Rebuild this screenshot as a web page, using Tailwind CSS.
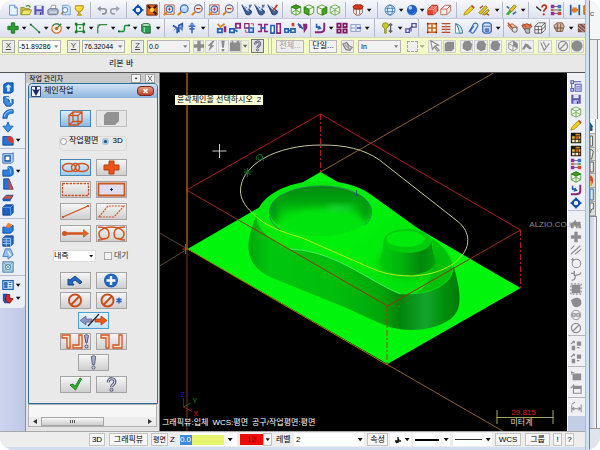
<!DOCTYPE html>
<html lang="ko">

<head>
  <meta charset="UTF-8" />
  <meta name="viewport" content="width=device-width, initial-scale=1.0" />
  <title>체인작업</title>
  <script src="https://cdn.jsdelivr.net/npm/@tailwindcss/browser@4"></script>
</head>

<body class="bg-white font-['Liberation_Sans','Noto_Sans_CJK_KR',sans-serif] text-[8px] leading-none text-black">

  <!-- Icon sprite -->
  <svg class="hidden" aria-hidden="true">
    <symbol id="v" viewBox="0 0 8 14"><path d="M1.500 5.500h5.400L4.200 9z" fill="#111" /></symbol>
    <symbol id="new" viewBox="0 0 14 14"><path d="M3 1.500h6l3 3v8.500H3z" fill="#e8f2ff" stroke="#5a86c8" /><path d="M9 1.500v3h3" fill="#a9c8f0" stroke="#5a86c8" /></symbol>
    <symbol id="open" viewBox="0 0 14 14"><path d="M1 12V4h4l1 1.500h5V12z" fill="#d8b83c" stroke="#8d8a2a" /><path d="M1 12.500 4 7h9.500L11 12.500z" fill="#f6e36a" stroke="#8d8a2a" /><path d="M7 3c2-2 4-1 5 1" fill="none" stroke="#3a9a2d" stroke-width="1.500" /></symbol>
    <symbol id="save" viewBox="0 0 14 14"><path d="M1.500 2h11v10.500h-11z" fill="#5b57b8" /><path d="M4 2h6v4H4z" fill="#e6e8fa" /><path d="M4 8.500h6v4H4z" fill="#c2c7ee" /><path d="M8 9.500h1.500v3H8z" fill="#34307c" /></symbol>
    <symbol id="print" viewBox="0 0 14 14"><path d="M4 6 5.500 1.500h5L9.500 6z" fill="#fff" stroke="#8995ad" /><path d="M1 7l2-1.500h9L13 7v4l-2 1.500H2L1 11z" fill="#a9b4c8" stroke="#636f88" /><path d="M3 9.500h8" stroke="#eff" /></symbol>
    <symbol id="preview" viewBox="0 0 14 14"><path d="M3 1.500h7l2 2v9H3z" fill="#cfe4fa" stroke="#6a9bd4" /><circle cx="6" cy="7" r="3" fill="#eef7ff" stroke="#4a78b8" /><path d="m4 9-2.500 3" stroke="#b67b40" stroke-width="1.800" /></symbol>
    <symbol id="cup" viewBox="0 0 14 14"><path d="M3 2h9c0 4-1 6-4 7v2l2 2H5l1.500-2V9C3 8 2 6 3 2z" fill="#f4cb18" stroke="#a98500" /><path d="M3 4h8M4 6h6" stroke="#fff08a" /></symbol>
    <symbol id="undo" viewBox="0 0 14 14"><path d="M3 5.500h6a3 3 0 0 1 0 6H7" fill="none" stroke="#8b8fa0" stroke-width="1.800" /><path d="M5.500 2 1.500 5.500l4 3.500z" fill="#8b8fa0" /></symbol>
    <symbol id="redo" viewBox="0 0 14 14"><path d="M11 5.500H5a3 3 0 0 0 0 6h2" fill="none" stroke="#9b9fae" stroke-width="1.800" /><path d="M8.500 2l4 3.500-4 3.500z" fill="#9b9fae" /></symbol>
    <symbol id="target" viewBox="0 0 14 14"><path d="M7 0l3 4H4zM7 14l3-4H4zM0 7l4-3v6zM14 7l-4-3v6z" fill="#0b4fae" /><circle cx="7" cy="7" r="3.600" fill="#eaf4ff" stroke="#0b4fae" stroke-width="2" /></symbol>
    <symbol id="fit" viewBox="0 0 14 14"><path d="M1 1h12v12H1z" fill="#e86a10" stroke="#5d2208" /><path d="m2 2 10 10M12 2 9 5" stroke="#3d1607" stroke-width="2.500" /><circle cx="7" cy="7" r="2.500" fill="#ffcf4b" /></symbol>
    <symbol id="zoomwin" viewBox="0 0 14 14"><path d="M2 1h11v11H2z" fill="none" stroke="#c0532e" /><circle cx="7.500" cy="6" r="3.800" fill="#d7e8fb" stroke="#3c6eb5" stroke-width="1.300" /><path d="m5 9-4 4" stroke="#e0821c" stroke-width="2.200" /><path d="M5.500 6h4m-2-2v4" stroke="#c22" /></symbol>
    <symbol id="zoom" viewBox="0 0 14 14"><circle cx="8.500" cy="5.500" r="4.500" fill="#b9d8fa" stroke="#3c6eb5" stroke-width="1.400" /><path d="m5 9-4 4" stroke="#e0821c" stroke-width="2.400" /><path d="M6 5c1-2 3-2 4-1" stroke="#fff" fill="none" /></symbol>
    <symbol id="zoomout" viewBox="0 0 14 14"><circle cx="8.500" cy="5.500" r="4.500" fill="#fbe8d2" stroke="#5d6fa8" stroke-width="1.400" /><path d="m5 9-4 4" stroke="#e0821c" stroke-width="2.400" /><path d="M6 5.500h5" stroke="#c03a1e" stroke-width="1.500" /></symbol>
    <symbol id="orbit" viewBox="0 0 14 14"><path d="M1 1 6 12c4 2 7-1 6-4z" fill="#3c5f9c" stroke="#182c58" /><path d="M2 1l7 7M11 1 6 7" stroke="#cfe0ff" stroke-width="1.500" /><path d="M9 1h4L10 6" fill="#5675aa" /></symbol>
    <symbol id="orbitred" viewBox="0 0 14 14"><path d="M1 1 6 12c4 2 7-1 6-4z" fill="#3c5f9c" stroke="#182c58" /><path d="M2 1l7 7" stroke="#cfe0ff" stroke-width="1.500" /><path d="m12 1-5 7" stroke="#d0391b" stroke-width="2" /></symbol>
    <symbol id="cubetop" viewBox="0 0 14 14"><path d="M7 1l5.500 2.500v7L7 13l-5.500-2.500v-7z" fill="#eef7e8" stroke="#4c9a2b" /><path d="M7 1l5.500 2.500L7 6 1.500 3.500z" fill="#3f9a1e" stroke="#2c7a13" /><path d="M7 6v7M2 10l5-3 5 3" fill="none" stroke="#4c9a2b" /></symbol>
    <symbol id="cubefront" viewBox="0 0 14 14"><path d="M7 1l5.500 2.500v7L7 13l-5.500-2.500v-7z" fill="#eef7e8" stroke="#4c9a2b" /><path d="M1.500 3.500 7 6v7l-5.500-2.500z" fill="#44a51e" stroke="#2c7a13" /><path d="m7 6 5.500-2.500" stroke="#4c9a2b" /></symbol>
    <symbol id="cuberight" viewBox="0 0 14 14"><path d="M7 1l5.500 2.500v7L7 13l-5.500-2.500v-7z" fill="#eef7e8" stroke="#4c9a2b" /><path d="M12.500 3.500 7 6v7l5.500-2.500z" fill="#44a51e" stroke="#2c7a13" /><path d="M7 6 1.500 3.500" stroke="#4c9a2b" /></symbol>
    <symbol id="cubewire" viewBox="0 0 14 14"><path d="M7 1l5.500 2.500v7L7 13l-5.500-2.500v-7zM7 6v7M1.500 3.500 7 6l5.500-2.500M2 10l5-3 5 3" fill="#f2faee" stroke="#6aa84b" /></symbol>
    <symbol id="cubered" viewBox="0 0 14 14"><path d="M2 5h10v5l-3 3H5l-3-3z" fill="#fff" stroke="#8c3a2a" /><path d="M1 3l3-2h7l2 2-2 3H3z" fill="#d8371c" stroke="#8f1a0b" /><path d="M5 6v6M9 6v6" stroke="#8c3a2a" /></symbol>
    <symbol id="globe" viewBox="0 0 14 14"><circle cx="7" cy="7" r="5.800" fill="#e2f1ff" stroke="#3977b8" /><ellipse cx="7" cy="7" rx="2.800" ry="5.800" fill="none" stroke="#3977b8" /><path d="M1.500 5h11M1.500 9h11" stroke="#3977b8" /></symbol>
    <symbol id="ball" viewBox="0 0 14 14"><circle cx="7" cy="7" r="6" fill="#1f5fc0" /><circle cx="5" cy="4.500" r="2.200" fill="#a9d0ff" /><path d="M3 11c3 2 6 1 8-2" stroke="#5ca0ef" fill="none" /></symbol>
    <symbol id="solidred" viewBox="0 0 14 14"><path d="M1 6 6 1.500h6.500V8L8 12.500H1z" fill="#e5452f" stroke="#a5170c" /><path d="M1 6h7v6.500M8 6l4.500-4.500M4 3.500h6.500V10" fill="none" stroke="#ffc2b3" /></symbol>
    <symbol id="wirered" viewBox="0 0 14 14"><path d="M1 6 6 1.500h6.500V8L8 12.500H1zM1 6h7v6.500M8 6l4.500-4.500" fill="#fff1ec" stroke="#c2554a" /></symbol>
    <symbol id="pencil" viewBox="0 0 14 14"><path d="m1 13 1.500-4L10 2l3 2.500-7.500 7z" fill="#f0d21c" stroke="#a88b10" /><path d="m10 2 3 2.500" stroke="#b5443b" stroke-width="2" /></symbol>
    <symbol id="pencils" viewBox="0 0 14 14"><path d="M1 10 9 2l2 2-8 8zM5 12l7-6 1 2-5 5z" fill="#e6c91d" stroke="#8d7a15" /><path d="m2 5 4-3M9 11l4 2" stroke="#a04a20" stroke-width="1.500" /></symbol>
    <symbol id="paint" viewBox="0 0 14 14"><path d="m1 12 4-5 3 2-4 4z" fill="#4aa53b" /><path d="m5 7 6-6 2 2-5 6z" fill="#e8c61f" stroke="#91770d" /><path d="M2 3l3 2M9 12l4-3" stroke="#4174be" stroke-width="2" /></symbol>
    <symbol id="query" viewBox="0 0 14 14"><path d="m0 3 6 5" stroke="#333" stroke-width="1.500" /><path d="M7 4c0-4 6-3 5 0 0 2-3 2-3 5" fill="none" stroke="#b73412" stroke-width="2" /><circle cx="9" cy="12" r="1.300" fill="#b73412" /></symbol>
    <symbol id="nodes" viewBox="0 0 14 14"><path d="M3 3h8M3 7h8M3 11h8" stroke="#555" /><path d="M1 1h4v4H1zM1 9h4v4H1z" fill="#9b2b98" /><path d="M9 1h4v4H9z" fill="#3b70cf" /><path d="M9 9h4v4H9z" fill="#d34632" /><path d="M1 6h3v2H1z" fill="#d34632" /><path d="M10 6h3v2h-3z" fill="#3a9a3f" /></symbol>
    <symbol id="dim" viewBox="0 0 14 14"><path d="M2 1v12M12 1v12" stroke="#1c5cb1" stroke-width="2" /><path d="M3 7h8" stroke="#e57b1f" stroke-width="2.500" /><path d="M4 4h5v6H4z" fill="#e57b1f" /></symbol>
    <symbol id="orange" viewBox="0 0 14 14"><path d="M1 2h11v10H1z" fill="#ec8c18" stroke="#a34e0a" /><path d="M3 4h4v6H3z" fill="#ffd66d" /></symbol>
    <symbol id="plus" viewBox="0 0 14 14"><path d="M5 1h4v4h4v4H9v4H5V9H1V5h4z" fill="#2d9a35" stroke="#15701c" /></symbol>
    <symbol id="line" viewBox="0 0 14 14"><path d="m2 3 10 9" stroke="#2f9a45" stroke-width="1.500" /><path d="M1 2h2v2H1zM11 11h2v2h-2z" fill="#135c25" /></symbol>
    <symbol id="circle" viewBox="0 0 14 14"><circle cx="6.500" cy="7.500" r="5.500" fill="#fff4e6" stroke="#c8702c" stroke-width="1.300" /><path d="M2 4.500a5.500 5.500 0 0 1 8-1" fill="none" stroke="#2f8f43" stroke-width="1.600" /><circle cx="6.500" cy="7.500" r="2" fill="#e0631c" /><path d="m7 7 5-5" stroke="#2f8f43" stroke-width="1.500" /></symbol>
    <symbol id="rect" viewBox="0 0 14 14"><path d="M3 3h8v8H3z" fill="#effbef" stroke="#2f8f43" stroke-width="1.500" /><path d="M1 1h3v3H1zM10 1h3v3h-3zM1 10h3v3H1zM10 10h3v3h-3z" fill="#1b7a2e" /><path d="M6 6h2v2H6z" fill="#1b7a2e" /></symbol>
    <symbol id="arc" viewBox="0 0 14 14"><path d="M2 13V8c0-4 2-5 5-5h6" fill="none" stroke="#2f8f43" stroke-width="1.500" /><path d="M2 7V3h4" fill="none" stroke="#555" stroke-dasharray="1 1" /></symbol>
    <symbol id="spline" viewBox="0 0 14 14"><path d="M1 11h5c3 0 0-7 3-7h4" fill="none" stroke="#228a38" stroke-width="1.800" /><path d="M0 10h2v2H0zM12 3h2v2h-2z" fill="#135c25" /></symbol>
    <symbol id="cyl" viewBox="0 0 14 14"><path d="M2 3h8l2 2v8H5l-3-2z" fill="#2f9a54" stroke="#1b6434" /><ellipse cx="7" cy="3.500" rx="5" ry="1.800" fill="#b6e6c0" stroke="#1b6434" /><path d="M5 6v6" stroke="#a7ddb5" stroke-width="1.500" /></symbol>
    <symbol id="split" viewBox="0 0 14 14"><path d="M1 4l5 3v6M8 12V4l4-2v4" fill="none" stroke="#2a57b5" stroke-width="2" /><path d="m2 10 4-4M8 6h4v4z" stroke="#5576b8" fill="#5576b8" /></symbol>
    <symbol id="pin" viewBox="0 0 14 14"><path d="M7 1v12M3 5h8M4 8h6" stroke="#3a64bd" stroke-width="1.800" /><circle cx="7" cy="3" r="2" fill="#5c83d0" /></symbol>
    <symbol id="xf1" viewBox="0 0 14 14"><path d="M2 8h5v4H2z" fill="#fff" stroke="#1f60b8" stroke-width="2" /><path d="M9 5h3v7H9z" fill="#a71e73" /><path d="m2 2 3 4 5-4" fill="none" stroke="#e0821c" stroke-width="2" /></symbol>
    <symbol id="xf2" viewBox="0 0 14 14"><path d="M1 8h5v4H1z" fill="#fff" stroke="#1f60b8" stroke-width="2" /><path d="M8 2h5v5H8z" fill="#fff" stroke="#8e2178" stroke-width="2" /><path d="m6 9 4 2" stroke="#1f60b8" stroke-width="2" /></symbol>
    <symbol id="xf3" viewBox="0 0 14 14"><path d="M2 2h5v5H2z" fill="#fff" stroke="#8e2178" stroke-width="1.500" /><path d="M7 7h5v5H7z" fill="#cfe0fa" stroke="#1f60b8" stroke-width="1.800" /><path d="M3 9v3h3M9 2h3v3" stroke="#c22f57" fill="none" /></symbol>
    <symbol id="xf4" viewBox="0 0 14 14"><path d="M1 3h4v8H1M13 3H9v8h4" fill="none" stroke="#8e2178" stroke-width="1.800" /><path d="M4 7h6" stroke="#1f60b8" stroke-width="2" /></symbol>
    <symbol id="xf5" viewBox="0 0 14 14"><path d="M1 4h4v9H1z" fill="#fff" stroke="#1f60b8" stroke-width="1.800" /><path d="M8 2h4v11H8z" fill="#fff" stroke="#8e2178" stroke-width="1.800" /></symbol>
    <symbol id="xf6" viewBox="0 0 14 14"><path d="M1 8h4v4H1zM8 8h5v4H8z" fill="#fff" stroke="#1f60b8" stroke-width="1.800" /><path d="M5 10h3" stroke="#1f60b8" stroke-width="2" /><path d="M9 1h3v4H9z" fill="#d2371f" /></symbol>
    <symbol id="xf7" viewBox="0 0 14 14"><path d="M1 3h4v4H3zM7 2h5v5L8 13z" fill="#8e2178" /><path d="m1 2 6 6" stroke="#1f60b8" stroke-width="2" /></symbol>
    <symbol id="elbow" viewBox="0 0 14 14"><path d="M3 2v4h4" fill="none" stroke="#1f60b8" stroke-width="1.800" /><path d="M12 1v7c0 3-2 4-4 4H1" fill="none" stroke="#8e2178" stroke-width="2.200" /><path d="M6 4l3 4-5 1z" fill="#1f60b8" /></symbol>
    <symbol id="grid4" viewBox="0 0 14 14"><path d="M1.500 2h4v4h-4zM8.500 2h4v4h-4zM1.500 8.500h4v4h-4zM8.500 8.500h4v4h-4z" fill="#f4dff0" stroke="#7f1763" stroke-width="2" /></symbol>
    <symbol id="stretch" viewBox="0 0 14 14"><path d="M1 3h11v8H1zM1 7h5M7 3v8" fill="#e5edf9" stroke="#8593bd" /><path d="M8 7h5" stroke="#4764b0" stroke-width="2" /></symbol>
    <symbol id="lamp" viewBox="0 0 14 14"><path d="M4 1a3 3 0 0 1 1 6v6H3V7a3 3 0 0 1 1-6z" fill="#c5ca28" stroke="#8b901a" /><path d="M10 2v10M8 4l2-2 2 2M8 10l2 2 2-2" fill="none" stroke="#5c6270" stroke-width="1.500" /></symbol>
    <symbol id="link" viewBox="0 0 14 14"><path d="M1 8h4v4H1zM8 2h5v4H8z" fill="#fff" stroke="#4a4f9c" stroke-width="1.500" /><path d="M5 8l4-3M7 11V7" stroke="#4a4f9c" stroke-width="1.500" /></symbol>
    <symbol id="mesh" viewBox="0 0 14 14"><path d="M2 2h10v10H2zM7 2v10M2 7h10" fill="#fff3e4" stroke="#c8641e" stroke-width="1.600" /><path d="M1 1h2v2H1zM11 1h2v2h-2zM1 11h2v2H1zM11 11h2v2h-2z" fill="#8e2c15" /></symbol>
    <symbol id="rows" viewBox="0 0 14 14"><path d="M2 2h10M2 5.300h10M2 8.700h10M2 12h10" stroke="#b8472a" stroke-width="1.500" /><path d="M7 2v10" stroke="#d29a6b" /></symbol>
    <symbol id="fin" viewBox="0 0 14 14"><path d="M3 2c5 1 8 5 8 11H7C7 8 6 5 3 2z" fill="#cfeaf7" stroke="#25627e" /><path d="M3 2v11h4" fill="#fff" stroke="#3d87a5" /></symbol>
    <symbol id="clip" viewBox="0 0 14 14"><path d="m2 12 6-10c3-2 6 1 4 4l-4 6c-2 2-5 0-3-3l3-4" fill="#dceafc" stroke="#3c66b0" stroke-width="1.300" /></symbol>
    <symbol id="bluebox" viewBox="0 0 14 14"><path d="M2 3l2-2h6l2 2v8l-2 2H4l-2-2z" fill="#cfe1fb" stroke="#3c66b0" stroke-width="1.500" /><path d="M3 5h8M5 8h4v3H5z" fill="#5b8bd8" stroke="#3c66b0" /></symbol>
    <symbol id="cam1" viewBox="0 0 14 14"><path d="m1 4 5-2 6 4-2 5-5-2z" fill="#e9bfa5" stroke="#a8593a" /><circle cx="9" cy="9" r="3" fill="#e2e2e2" stroke="#555" /><path d="m1 1 5 6" stroke="#d0531c" stroke-width="1.800" /></symbol>
    <symbol id="cam2" viewBox="0 0 14 14"><path d="m1 4 6-2 6 3-3 3-6 1z" fill="#d28158" stroke="#7e3d22" /><path d="M4 8h6v5H6z" fill="#bdbdbd" stroke="#5a5a5a" /><path d="m2 2 4 4M12 2 9 5" stroke="#d0531c" stroke-width="1.500" /></symbol>
    <symbol id="wirebox" viewBox="0 0 14 14"><path d="M1 5l4-4h8v8l-4 4H1zM1 5h8v8M9 5l4-4M5 5v8M1 9h8M9 9l4-4" fill="#fafafa" stroke="#4b4b4b" /></symbol>
    <symbol id="tile" viewBox="0 0 14 14"><path d="M1 4l4-3h6l2 4-2 6H4z" fill="#d8b59e" stroke="#74503c" /><path d="M1 7h11M5 2v9M9 2v9" stroke="#74503c" /></symbol>
    <symbol id="film" viewBox="0 0 14 14"><path d="M1 2h12v10H1z" fill="#84504a" /><path d="m2 3 10 9M6 2l7 6M1 6l7 6" stroke="#d8c2bb" /></symbol>
    <symbol id="palette" viewBox="0 0 14 14"><path d="M1 1h12v12H1z" fill="#181818" /><path d="M2.500 5h3v3h-3zM10 5h2v3h-2z" fill="#f3c21d" /><path d="M6.500 5h3v3h-3z" fill="#e55d1f" /><path d="M2.500 9h3v3h-3zM6.500 9h3v3h-3z" fill="#f7eeb8" /><path d="M10 9h2v3h-2zM6.500 2h5v2h-5z" fill="#c98422" /></symbol>
    <symbol id="layers" viewBox="0 0 14 14"><path d="M1 1h3v3H1zM1 10h3v3H1zM2 4v6M4 2h9M6 5h7v8H6z" fill="#d5d9f3" stroke="#5a5eae" stroke-width="1.200" /><path d="M7 8h5M7 10.500h5" stroke="#5a5eae" /></symbol>

    <symbol id="s-up" viewBox="0 0 14 14"><path d="M2 3l3-2h8v10l-3 2H2z" fill="#1c6fd0" stroke="#0a4796" /><path d="M6 11V6H4l3.500-3.500L11 6H9v5z" fill="#d5ecff" /></symbol>
    <symbol id="s-rev" viewBox="0 0 14 14"><path d="M2 2h6v5l5-2v5l-3 3H5L2 9z" fill="#3a8be0" stroke="#0a4796" /><path d="M5 3c4 0 6 3 5 6" fill="none" stroke="#e2f1ff" stroke-width="1.800" /></symbol>
    <symbol id="s-sweep" viewBox="0 0 14 14"><path d="M1 12C1 5 6 1 13 2v4C8 6 6 8 6 12z" fill="#2f86e5" stroke="#0e4fa4" /><path d="M3 10c0-4 4-7 9-7" fill="none" stroke="#a6d3ff" /></symbol>
    <symbol id="s-loft" viewBox="0 0 14 14"><path d="M7 1l2 5h4l-6 7-6-7h4z" fill="#3d93ea" stroke="#1459b5" /></symbol>
    <symbol id="s-fillet" viewBox="0 0 14 14"><path d="M1 3h7c4 0 5 2 5 5v5H1z" fill="#2176d8" stroke="#0b479a" /><path d="M6 3h3c3 0 4 2 4 5v3c-4 0-7-3-7-8z" fill="#e8362a" /></symbol>
    <symbol id="s-shell" viewBox="0 0 14 14"><path d="M1 2h10l2-1v10l-2 2H1z" fill="#bcdcfb" stroke="#2460a8" /><path d="M3.500 4.500h6v6h-6z" fill="#f2faff" stroke="#12509c" stroke-width="1.500" /></symbol>
    <symbol id="s-bool" viewBox="0 0 14 14"><path d="M1 6h6V2h4c2 2 2 3 2 5v4l-3 2H1z" fill="#2a7fe0" stroke="#0b479a" /><path d="M7 2l3 4v4" stroke="#9bccfb" fill="none" /></symbol>
    <symbol id="s-draft" viewBox="0 0 14 14"><path d="M2 1h6l5 12H2z" fill="#2176d8" stroke="#0b479a" /><path d="M7 1l6 12H8z" fill="#e0432c" /></symbol>
    <symbol id="s-plate" viewBox="0 0 14 14"><path d="m1 9 4-4h8l-3 5H1z" fill="#c8573f" stroke="#173f88" /><path d="M1 9h9v3H1z" fill="#1a5cb8" /></symbol>
    <symbol id="s-cube" viewBox="0 0 14 14"><path d="M1 4l3-3h9v9l-3 3H1z" fill="#1c60c4" stroke="#0a377c" /><path d="M1 4h9v9M10 4l3-3" fill="none" stroke="#6ba7ef" /></symbol>
    <symbol id="s-push" viewBox="0 0 14 14"><path d="M1 6h8l4-2v6l-3 3H1z" fill="#2a80e0" stroke="#0b479a" /><path d="m4 6 3-5 5 2-3 4z" fill="#ef8234" /></symbol>
    <symbol id="s-mesh" viewBox="0 0 14 14"><path d="M1 4l3-3h9v9l-3 3H1z" fill="#2c6dbf" stroke="#0a377c" /><path d="M1 7h9M5 4v9M1 10h9M1 4h9v9" fill="none" stroke="#a9cdf5" /></symbol>
    <symbol id="s-flip" viewBox="0 0 14 14"><path d="M4 1h6l3 7-6 5v-3H1z" fill="#91bff0" stroke="#3a78c2" /><path d="M7 4l3 5" stroke="#fff" stroke-width="1.500" /></symbol>
    <symbol id="s-net" viewBox="0 0 14 14"><path d="M1 1h12v12H1z" fill="#b6d5e8" stroke="#34709b" /><circle cx="7" cy="7" r="3" fill="#e5f5fd" stroke="#34709b" /><path d="m2 2 10 10M12 2 2 12" stroke="#6aa3c8" /></symbol>
    <symbol id="s-doc" viewBox="0 0 14 14"><path d="M1 2h12v10H1z" fill="#d5e8fb" stroke="#2460a8" stroke-width="1.500" /><path d="M3 4h3v3H3zM3 8h3v2H3zM8 4h3M8 6.500h3M8 9h3" stroke="#2460a8" fill="#2f7fdc" /></symbol>
    <symbol id="s-mix" viewBox="0 0 14 14"><path d="M1 2h5v4h3v7H3L1 10z" fill="#1c55b8" /><path d="M5 3h4v4l4 1-4 5-5-3z" fill="#d8292b" stroke="#7c1220" /></symbol>

    <!-- disabled glyphs take the current colour -->
    <symbol id="g-fig" viewBox="0 0 14 14"><path d="M1 12V6l3-1 2-3 2 3 4-1 1 8h-3V9H9v3H7V9H4v3z" fill="currentColor" /></symbol>
    <symbol id="g-plus" viewBox="0 0 14 14"><path d="M5 1h4v4h4v4H9v4H5V9H1V5h4z" fill="currentColor" /></symbol>
    <symbol id="g-lines" viewBox="0 0 14 14"><path d="m1 12 11-10M6 12l7-6M1 6l4-4" stroke="currentColor" stroke-width="1.300" /></symbol>
    <symbol id="g-circ" viewBox="0 0 14 14"><circle cx="7.500" cy="7.500" r="5" fill="none" stroke="currentColor" stroke-width="1.200" /><path d="M1 3h4M3 1v5" stroke="currentColor" /></symbol>
    <symbol id="g-spl" viewBox="0 0 14 14"><path d="M2 12c6 0 3-5 5-6s4 1 6-3M1 4h4M5 1v6" fill="none" stroke="currentColor" stroke-width="1.500" /></symbol>
    <symbol id="g-sq" viewBox="0 0 14 14"><path d="M2 2h10v10H2z" fill="currentColor" /><path d="M1 1h12v12H1z" fill="none" stroke="currentColor" stroke-width="1.500" stroke-dasharray="2 2" /></symbol>
    <symbol id="g-dot" viewBox="0 0 14 14"><path d="M7.500 2a5.500 5.500 0 1 1-5 7L1 5l3-2z" fill="currentColor" /></symbol>
    <symbol id="g-net" viewBox="0 0 14 14"><circle cx="7" cy="7" r="5.500" fill="none" stroke="currentColor" /><path d="M3 5h3v4H3zM8 5h3v4H8zM2 7h10" fill="none" stroke="currentColor" /></symbol>
    <symbol id="g-no" viewBox="0 0 14 14"><circle cx="7" cy="7" r="5.300" fill="none" stroke="currentColor" stroke-width="1.500" /><path d="m3.500 10.500 7-7" stroke="currentColor" stroke-width="1.500" /></symbol>
    <symbol id="g-copy" viewBox="0 0 14 14"><path d="M8 3h5v5H8zM2 8h4v5H2z" fill="currentColor" /><path d="M1 6l4-4M5 5V2M8 10h3" stroke="currentColor" stroke-width="1.500" /></symbol>
    <symbol id="g-fill" viewBox="0 0 14 14"><path d="M3 4h10v8H3z" fill="currentColor" /><path d="M1 3h4M2 1v5" stroke="currentColor" /></symbol>
    <symbol id="g-win" viewBox="0 0 14 14"><path d="M4 4h9v8H4z" fill="none" stroke="currentColor" stroke-width="1.300" /><path d="M4 4h9v3H4z" fill="currentColor" /><path d="m1 6 4-4" stroke="currentColor" stroke-width="1.500" /></symbol>
    <symbol id="g-dim" viewBox="0 0 14 14"><path d="M2 5v8M13 4v9M3 9h9M5 7 3 9l2 2M10 7l2 2-2 2M2 4l4-3" fill="none" stroke="currentColor" stroke-width="1.200" /></symbol>
    <symbol id="g-ball" viewBox="0 0 14 14"><circle cx="7" cy="7" r="6.500" fill="currentColor" /></symbol>
    <symbol id="g-hex" viewBox="0 0 14 14"><path d="m4 1.500 6-.5 3 4-1 6-5 2-5-3V5z" fill="currentColor" /></symbol>
    <symbol id="g-rbox" viewBox="0 0 14 14"><path d="m2 4 3-2h8v8l-3 3H2z" fill="currentColor" /></symbol>
    <symbol id="g-half" viewBox="0 0 14 14"><path d="m7 1 5 3v6l-5 3-5-3V4z" fill="none" stroke="currentColor" /><path d="m7 1 5 3v6l-5-3z" fill="currentColor" /><path d="M7 7v6M2 4l5 3" stroke="currentColor" /></symbol>
    <symbol id="g-bend" viewBox="0 0 14 14"><path d="M1 11l4-7 3 1 5 5-3 1-4-3-2 3z" fill="currentColor" /></symbol>
    <symbol id="g-check" viewBox="0 0 14 14"><path d="m2 3 4 9 6-8M5 2l3 6" fill="none" stroke="currentColor" stroke-width="1.300" /></symbol>
    <symbol id="g-arrow" viewBox="0 0 14 14"><path d="m2 1 9 5-4 1 5 5-2 1-4-5-2 3z" fill="#f6f6f6" stroke="currentColor" stroke-width="1.300" /></symbol>
    <symbol id="g-zap" viewBox="0 0 14 14"><path d="M9 1 3 7h3l-2 6 7-7H8l3-5z" fill="currentColor" /></symbol>
    <symbol id="g-bang" viewBox="0 0 14 14"><path d="M5 1h4L8 9H6zM5.500 10.500h3V13h-3z" fill="currentColor" /></symbol>
    <symbol id="g-cam" viewBox="0 0 14 14"><path d="M1 3h2V1h2v2h4V1h3v2h1v10H1z" fill="currentColor" /></symbol>
    <symbol id="g-chain" viewBox="0 0 14 14"><path d="m1 4 5-2 3 4 4 2-3 4-5-1z" fill="#cfcfcf" stroke="currentColor" stroke-width="1.500" /><path d="M4 5l6 6M7 3l2 8" stroke="currentColor" /></symbol>

    <symbol id="help" viewBox="0 0 14 14"><path d="M4 5c0-5 7-4 6 0 0 2-3 2-3 4.500" fill="none" stroke="#555975" stroke-width="3" /><path d="M4 5c0-5 7-4 6 0 0 2-3 2-3 4.500" fill="none" stroke="#d5d8ec" stroke-width="1" /><circle cx="7" cy="12" r="1.500" fill="#b6bad3" stroke="#555975" stroke-width=".8" /></symbol>
    <symbol id="bang" viewBox="0 0 14 14"><path d="M5 1.500c1-1 3-1 4 0L8 9H6z" fill="#a9adcb" stroke="#50557a" stroke-width=".8" /><circle cx="7" cy="11.700" r="1.500" fill="#c9cce2" stroke="#50557a" stroke-width=".8" /></symbol>
  </svg>

  <div class="flex h-screen min-h-[450px] overflow-hidden rounded-[14px] bg-[#d3dff2]">

    <div class="flex min-w-0 flex-1 flex-col">

      <!-- File / view toolbar -->
      <div class="flex h-[19px] shrink-0 overflow-hidden border-b border-[#c3c9dc] bg-linear-to-b from-[#f7f8fc] to-[#dfe3ef] pt-0.5" role="toolbar" aria-label="File and view">
        <div class="flex w-[91px] shrink-0 border-r border-[#b4bace] pr-1 pl-1.5" data-icons="new open save print preview cup"></div>
        <div class="flex w-[36px] shrink-0 border-r border-[#b4bace] px-1" data-icons="undo redo"></div>
        <div class="flex w-[33px] shrink-0 border-r border-[#b4bace] pl-1" data-icons="target fit"></div>
        <div class="flex w-[45px] shrink-0 border-r border-[#b4bace] pl-0.5" data-icons="zoomwin zoom zoomout"></div>
        <div class="flex w-[33px] shrink-0 border-r border-[#b4bace] px-0.5" data-icons="zoomwin zoomout"></div>
        <div class="flex w-[45px] shrink-0 border-r border-[#b4bace] px-0.5" data-icons="orbit orbit orbitred"></div>
        <div class="flex w-[63px] shrink-0 border-r border-[#b4bace] pr-1 pl-1.5" data-icons="cubetop cubefront cuberight cubewire"></div>
        <div class="flex w-[32px] shrink-0 border-r border-[#b4bace] pr-1 pl-1.5" data-icons="cubered v"></div>
        <div class="flex w-[79px] shrink-0 border-r border-[#b4bace] pr-1 pl-1.5" data-icons="globe v ball v solidred wirered"></div>
        <div class="flex w-[46px] shrink-0 border-r border-[#b4bace] pl-1" data-icons="pencil pencils v"></div>
        <div class="flex w-[26px] shrink-0 border-r border-[#b4bace]" data-icons="paint v"></div>
        <div class="flex w-[35px] shrink-0 border-r border-[#b4bace] pl-1.5" data-icons="query nodes"></div>
        <div class="flex w-[32px] shrink-0 pl-1" data-icons="dim orange"></div>
      </div>

      <!-- Sketch / transform toolbar -->
      <div class="flex h-[18px] shrink-0 overflow-hidden bg-linear-to-b from-[#f4f6fb] to-[#dde1ee]" role="toolbar" aria-label="Sketch">
        <div class="flex w-[165px] shrink-0 border-r border-[#b4bace] pr-0.5 pl-1.5" data-icons="plus v line v circle v rect v arc v spline v cyl v"></div>
        <div class="flex w-[44px] shrink-0 border-r border-[#b4bace] pl-1.5" data-icons="split pin v"></div>
        <div class="flex w-[102px] shrink-0 border-r border-[#b4bace] pl-1.5" data-icons="xf1 xf2 xf3 xf4 xf5 xf6 xf7"></div>
        <div class="flex w-[64px] shrink-0 border-r border-[#b4bace] px-0.5" data-icons="elbow v grid4 stretch v"></div>
        <div class="flex w-[44px] shrink-0 border-r border-[#b4bace] pl-1.5" data-icons="lamp v link"></div>
        <div class="flex w-[85px] shrink-0 border-r border-[#b4bace] pl-1.5" data-icons="mesh rows fin clip bluebox v"></div>
        <div class="flex w-[46px] shrink-0 border-r border-[#b4bace] px-0.5" data-icons="cam1 cam2 wirebox"></div>
        <div class="flex w-[40px] shrink-0 pl-0.5" data-icons="tile v film"></div>
      </div>

      <!-- Coordinate bar -->
      <div class="flex h-[18px] shrink-0 items-center overflow-hidden border-y border-[#d2d8b8] bg-[#f4fbc4] pl-0.5 text-[7px]">
        <label for="cx" class="flex h-[13px] w-[13px] shrink-0 items-center justify-center border border-[#a9a9a9] bg-[#ececec] text-[8px] text-[#444] underline">X</label>
        <div class="ml-[3px] flex h-[13px] w-[43px] shrink-0 border border-[#b5b5b5] bg-white"><input id="cx" value="-51.89286" class="w-full min-w-0 flex-1 outline-none" /><svg class="w-2 shrink-0 opacity-50"><use href="#v" /></svg></div>
        <label for="cy" class="ml-1.5 flex h-[13px] w-[13px] shrink-0 items-center justify-center border border-[#a9a9a9] bg-[#ececec] text-[8px] text-[#444] underline">Y</label>
        <div class="ml-0.5 flex h-[13px] w-[43px] shrink-0 border border-[#b5b5b5] bg-[#f1f1f1]"><input id="cy" value="76.32044" class="w-full min-w-0 flex-1 pl-px outline-none" /><svg class="w-2 shrink-0 opacity-50"><use href="#v" /></svg></div>
        <label for="cz" class="ml-1.5 flex h-[13px] w-[13px] shrink-0 items-center justify-center border border-[#a9a9a9] bg-[#ececec] text-[8px] text-[#444] underline">Z</label>
        <div class="ml-[3px] flex h-[13px] w-[43px] shrink-0 border border-[#b5b5b5] bg-[#f1f1f1]"><input id="cz" value="0.0" class="w-full min-w-0 flex-1 pl-px outline-none" /><svg class="w-2 shrink-0 opacity-50"><use href="#v" /></svg></div>
        <div class="ml-[3px] flex h-[13px] w-[48px] shrink-0 gap-px text-[#8c8c8c] [&>button]:border [&>button]:border-[#d0d0d0] [&>button]:bg-[#efefef]" data-icons="g-plus g-zap g-bang g-cam"></div>
        <div class="flex h-[13px] w-2 shrink-0 border border-[#c4c4c4] bg-[#eee] opacity-60" data-icons="v"></div>
        <button type="button" aria-label="help" class="ml-0.5 h-[14px] w-[13px] shrink-0 border border-[#777] bg-[#e2e2e2]"><svg class="h-full w-full"><use href="#help" /></svg></button>
        <div class="ml-1 h-full w-1 shrink-0 border-x border-[#c6cca8]"></div>
        <button type="button" class="ml-1 h-[13px] w-[28px] shrink-0 border border-[#b9b9b9] bg-[#eee] text-[8px] text-[#9a9a9a]">전체...</button>
        <button type="button" class="ml-[5px] h-[13px] w-[28px] shrink-0 border border-[#b9b9b9] bg-[#f4f4f4] text-[8px]">단일...</button>
        <button type="button" aria-label="chain" class="ml-1 h-[13px] w-[13px] shrink-0 border border-[#c4c4c4] bg-[#eee] text-[#8a8a8a]"><svg class="h-full w-full"><use href="#g-chain" /></svg></button>
        <div class="relative ml-1 h-[13px] w-[43px] shrink-0 border border-[#b5b5b5] bg-[#f1f1f1]">
          <select aria-label="Selection mode" class="h-full w-full appearance-none pl-0.5 outline-none"><option>In</option></select>
          <svg class="pointer-events-none absolute top-0 right-0 h-full w-2 opacity-50"><use href="#v" /></svg>
        </div>
        <button type="button" aria-label="window" class="ml-1.5 h-[11px] w-[11px] shrink-0 border border-dashed border-[#a8a8a8] bg-[#efefef]"></button>
        <svg class="h-[13px] w-2 shrink-0 opacity-30"><use href="#v" /></svg>
        <div class="ml-0.5 flex h-[13px] w-[28px] shrink-0 gap-px text-[#8c8c8c] [&>button]:border [&>button]:border-[#d0d0d0] [&>button]:bg-[#efefef]" data-icons="g-arrow g-rbox"></div>
        <div class="ml-1 flex h-[13px] w-[42px] shrink-0 gap-px text-[#8c8c8c] [&>button]:border [&>button]:border-[#d0d0d0] [&>button]:bg-[#efefef]" data-icons="g-hex g-hex g-hex"></div>
        <div class="ml-1 flex h-[13px] w-[28px] shrink-0 gap-px text-[#8c8c8c] [&>button]:border [&>button]:border-[#d0d0d0] [&>button]:bg-[#efefef]" data-icons="g-half g-bend"></div>
        <div class="ml-1 flex h-[13px] w-[14px] shrink-0 text-[#8c8c8c] [&>button]:border [&>button]:border-[#d0d0d0] [&>button]:bg-[#efefef]" data-icons="g-check"></div>
        <div class="ml-1 flex h-[13px] w-[28px] shrink-0 gap-px text-[#8c8c8c] [&>button]:border [&>button]:border-[#d0d0d0] [&>button]:bg-[#efefef]" data-icons="g-no g-ball"></div>
      </div>

      <!-- Ribbon bar -->
      <div class="h-[18px] shrink-0 border-b border-[#555] bg-[#e8e8e8] pt-[5px] pl-[109px]">리본 바</div>

      <div class="flex min-h-0 flex-1">

        <!-- Solids toolbar -->
        <aside class="w-[26px] shrink-0 border-r border-[#8790a8] bg-linear-to-r from-[#cdd4ee] to-[#bfc8e6]">
          <div class="w-[25px] rounded-br bg-[#eceef6] pt-2 pb-0.5" role="toolbar" aria-label="Solids">
            <div class="flex flex-col px-0.5 pb-0.5" data-column="s-up s-rev s-sweep s-loft s-fillet+"></div>
            <div class="flex flex-col border-t border-[#b9bfd0] px-0.5 py-0.5" data-column="s-shell s-bool+ s-draft s-plate s-cube"></div>
            <div class="flex flex-col border-t border-[#b9bfd0] px-0.5 py-0.5" data-column="s-push s-mesh s-flip s-net"></div>
            <div class="flex flex-col border-t border-[#b9bfd0] px-0.5 py-0.5" data-column="s-doc+ s-mix+"></div>
          </div>
        </aside>

        <!-- Operations manager -->
        <section class="flex w-[133px] shrink-0 flex-col bg-[#e4e4e4]">
          <header class="flex h-[10px] shrink-0 items-center bg-[#c9c9c9] pr-1 pl-[3px] text-[7px]">
            <h2 class="flex-1">작업 관리자</h2>
            <button type="button" aria-label="menu" class="mr-1 h-[9px] w-[10px] border border-[#999] bg-[#f3f3f3]"><svg class="h-full w-full"><use href="#v" /></svg></button>
            <button type="button" aria-label="close panel" class="h-[9px] w-[10px] border border-[#aaa] bg-[#f3f3f3]"><svg class="h-full w-full" viewBox="0 0 10 10"><path d="m2 1 6 8M8 1 2 9" stroke="#333" /></svg></button>
          </header>

          <!-- Chaining dialog -->
          <form class="mr-px ml-0.5 flex h-[321px] shrink-0 flex-col rounded-t border border-[#2c6f92] bg-[#e9e9e9]">
            <header class="flex h-[14px] shrink-0 items-center rounded-t bg-linear-to-b from-[#cfe2f6] to-[#8eb4dc] pr-[3px] pl-0.5">
              <svg class="mr-[3px] h-[11px] w-[10px]" viewBox="0 0 10 11"><path d="M.5.5h9v10h-9z" fill="#f1f4fb" stroke="#3b4676" /><path d="M4 1h2v3l3-1-4 7-4-7 3 1z" fill="#20296e" /></svg>
              <h1 class="flex-1">체인작업</h1>
              <button type="button" aria-label="close" class="h-[10px] w-[17px] rounded-sm border border-[#7c2418] bg-linear-to-b from-[#e59a85] to-[#c03d22]"><svg class="h-full w-full" viewBox="0 0 15 8"><path d="m5.500 2 4 4M9.500 2l-4 4" stroke="#fff" stroke-width="1.500" /></svg></button>
            </header>

            <div class="flex flex-col items-center pt-3">
              <div class="flex gap-[5px]">
                <button type="button" aria-label="wireframe" class="h-[17px] w-[31px] border border-[#4a86b4] bg-linear-to-b from-[#d9eefc] to-[#86bce6]">
                  <svg class="h-full w-full" viewBox="0 0 29 15"><path d="M8 4.500h9v9.500H8zM12 1h9v9.500h-9zM8 4.500 12 1M17 4.500 21 1M17 14l4-3.500M8 14l4-3.500" fill="none" stroke="#d4521c" stroke-width="1.300" /></svg>
                </button>
                <button type="button" aria-label="solid" class="h-[17px] w-[31px] border border-[#c0c0c0] bg-[#e6e6e6]">
                  <svg class="h-full w-full" viewBox="0 0 29 15"><path d="m7 4 3-3h12v9l-4 4H7z" fill="#929292" /></svg>
                </button>
              </div>

              <fieldset class="mt-[9px] flex h-[15px] w-[68px] items-center rounded-sm border border-[#dadada]">
                <label class="flex items-center"><input type="radio" name="plane" class="mr-0.5 h-[7px] w-[7px] appearance-none rounded-full border border-[#999] bg-white" />작업평면</label>
                <label class="ml-1 flex items-center"><input type="radio" name="plane" checked class="mr-[3px] h-[7px] w-[7px] appearance-none rounded-full border border-[#8a9cb0] bg-white checked:border-2 checked:border-[#a6c4dd] checked:bg-[#14507c]" />3D</label>
              </fieldset>

              <div class="mt-2 grid grid-cols-2 gap-x-[5px] gap-y-[5px]">
                <button type="button" aria-label="chain" class="h-[17px] w-[31px] border border-[#4a86b4] bg-linear-to-b from-[#e4f3fd] to-[#9acbee]">
                  <svg class="h-full w-full" viewBox="0 0 29 15"><g fill="none" stroke="#d4521c" stroke-width="1.500"><ellipse cx="8" cy="7.500" rx="6.500" ry="4" /><circle cx="14.500" cy="7.500" r="4" /><ellipse cx="21" cy="7.500" rx="6.500" ry="4" /></g></svg>
                </button>
                <button type="button" aria-label="point" class="h-[17px] w-[31px] border border-[#a5a5a5] bg-linear-to-b from-[#f6f6f6] to-[#cfcfcf]">
                  <svg class="h-full w-full" viewBox="0 0 29 15"><path d="M12 1h5v4h5v5h-5v4h-5v-4H7V5h5z" fill="#e8561a" stroke="#bb3c0e" /></svg>
                </button>
                <button type="button" aria-label="window" class="h-[17px] w-[31px] border border-[#a5a5a5] bg-linear-to-b from-[#f6f6f6] to-[#cfcfcf]">
                  <svg class="h-full w-full" viewBox="0 0 29 15"><path d="M1.500 1.500h26v12h-26z" fill="none" stroke="#c9562a" stroke-width="1.300" stroke-dasharray="2.500 1" /></svg>
                </button>
                <button type="button" aria-label="area" class="h-[17px] w-[31px] border border-[#a5a5a5] bg-linear-to-b from-[#f6f6f6] to-[#cfcfcf]">
                  <svg class="h-full w-full" viewBox="0 0 29 15"><path d="M1.500 1.500h26v12h-26z" fill="#dedef0" stroke="#cb5b25" stroke-width="1.800" /><path d="M13 7.500h3m-1.500-1.500v3" stroke="#222c50" /></svg>
                </button>
                <button type="button" aria-label="single" class="h-[17px] w-[31px] border border-[#a5a5a5] bg-linear-to-b from-[#f6f6f6] to-[#cfcfcf]">
                  <svg class="h-full w-full" viewBox="0 0 29 15"><path d="M2 13 27 2" stroke="#d4521c" stroke-width="1.300" /><path d="M1 12h2v2H1zM26 1h2v2h-2z" fill="#d4521c" /></svg>
                </button>
                <button type="button" aria-label="polygon" class="h-[17px] w-[31px] border border-[#a5a5a5] bg-linear-to-b from-[#f6f6f6] to-[#cfcfcf]">
                  <svg class="h-full w-full" viewBox="0 0 29 15"><path d="M2 13 11 2h16L17 13z" fill="none" stroke="#c9562a" stroke-width="1.200" stroke-dasharray="2 1" /></svg>
                </button>
                <button type="button" aria-label="vector" class="h-[17px] w-[31px] border border-[#a5a5a5] bg-linear-to-b from-[#f6f6f6] to-[#cfcfcf]">
                  <svg class="h-full w-full" viewBox="0 0 29 15"><path d="M3 7.500h20" stroke="#d4521c" stroke-width="2.500" /><circle cx="3.500" cy="7.500" r="2.500" fill="#d4521c" /><path d="m22 3 6 4.500-6 4.500z" fill="#e2641e" /></svg>
                </button>
                <button type="button" aria-label="partial" class="h-[17px] w-[31px] border border-[#a5a5a5] bg-linear-to-b from-[#f6f6f6] to-[#cfcfcf]">
                  <svg class="h-full w-full" viewBox="0 0 29 15"><path d="M1 1c9 0 11 3 11 6.500S10 13 7 13s-5-2-5-5.500S8 1 14.500 1 27 4 27 7.500 25 13 22 13s-5-2-5-5.500S19 1 28 1M1 14c3 0 5 0 7-2M28 14c-3 0-5 0-7-2" fill="none" stroke="#d4521c" stroke-width="1.500" /></svg>
                </button>
              </div>

              <div class="mt-2 flex w-full items-center pl-6">
                <div class="relative h-3 w-[43px] border border-[#dcdcdc] bg-white">
                  <select aria-label="선택 방식" class="h-full w-full appearance-none outline-none"><option>내측</option></select>
                  <svg class="pointer-events-none absolute top-0 right-0 h-full w-2"><use href="#v" /></svg>
                </div>
                <label class="ml-2 flex items-center text-[#444]"><input type="checkbox" class="mr-0.5 h-2 w-2 appearance-none border border-[#aaa] bg-[#f3f3f3]" />대기</label>
              </div>

              <div class="mt-2.5 grid grid-cols-2 gap-x-[5px] gap-y-[3px]">
                <button type="button" aria-label="last" class="h-[17px] w-[31px] border border-[#a5a5a5] bg-linear-to-b from-[#f6f6f6] to-[#cfcfcf]">
                  <svg class="h-full w-full" viewBox="0 0 29 15"><path d="M7 12V6l2 1 5-4 7 6-2 2-5-4-3 2 2 3z" fill="#2467bd" stroke="#174a92" /></svg>
                </button>
                <button type="button" aria-label="end chain" class="h-[17px] w-[31px] border border-[#a5a5a5] bg-linear-to-b from-[#f6f6f6] to-[#cfcfcf]">
                  <svg class="h-full w-full" viewBox="0 0 29 15"><circle cx="14" cy="7.500" r="7" fill="#1f64bd" /><path d="M14 3v9M9.500 7.500h9" stroke="#fff" stroke-width="2.500" /></svg>
                </button>
                <button type="button" aria-label="unselect" class="h-[17px] w-[31px] border border-[#a5a5a5] bg-linear-to-b from-[#f6f6f6] to-[#cfcfcf]">
                  <svg class="h-full w-full" viewBox="0 0 29 15"><circle cx="14" cy="7.500" r="6" fill="none" stroke="#cf4d1c" stroke-width="2" /><path d="m10 12 8.500-9" stroke="#cf4d1c" stroke-width="2" /></svg>
                </button>
                <button type="button" aria-label="unselect all" class="h-[17px] w-[31px] border border-[#a5a5a5] bg-linear-to-b from-[#f6f6f6] to-[#cfcfcf]">
                  <svg class="h-full w-full" viewBox="0 0 29 15"><circle cx="10.500" cy="7.500" r="6" fill="none" stroke="#cf4d1c" stroke-width="2" /><path d="m6.500 12 8.500-9" stroke="#cf4d1c" stroke-width="2" /><path d="M22 4.500v6M19.500 6l5 3M24.500 6l-5 3" stroke="#2467bd" stroke-width="1.500" /></svg>
                </button>
              </div>

              <button type="button" aria-label="reverse" class="mt-[3px] h-[17px] w-[31px] border border-[#4fa0cf] bg-linear-to-b from-[#eaf7ff] to-[#c2e2f6]">
                <svg class="h-full w-full" viewBox="0 0 29 15"><path d="M1 7.500 7 3v3h6v3H7v3z" fill="#9193bf" stroke="#63659b" stroke-width=".8" /><path d="M28 7.500 22 3v3h-6v3h6v3z" fill="#ea5b1c" stroke="#b43d0d" stroke-width=".8" /><path d="M9 13 20 1" stroke="#222" stroke-width="1.200" /></svg>
              </button>

              <div class="mt-1 flex gap-[5px]">
                <button type="button" aria-label="start end" class="h-[17px] w-[31px] border border-[#a5a5a5] bg-linear-to-b from-[#f6f6f6] to-[#cfcfcf]">
                  <svg class="h-full w-full" viewBox="0 0 29 15"><path d="M1 1h8v13H6V4H1zM21 1v13h-9v-3h6V1z" fill="#fbe3d2" stroke="#d4521c" stroke-width="1.300" /><path d="M23.500 1.500c1-1 3-1 4 0L26 9h-1z" fill="#a9adcb" stroke="#50557a" /><circle cx="25.500" cy="12.500" r="1.500" fill="#c9cce2" stroke="#50557a" /></svg>
                </button>
                <button type="button" aria-label="start" class="h-[17px] w-[31px] border border-[#a5a5a5] bg-linear-to-b from-[#f6f6f6] to-[#cfcfcf]">
                  <svg class="h-full w-full" viewBox="0 0 29 15"><path d="M4 1h8v13H9V4H4zM25 1v13h-9v-3h6V1z" fill="#fbe3d2" stroke="#d4521c" stroke-width="1.300" /></svg>
                </button>
              </div>

              <button type="button" aria-label="options" class="mt-1 h-[17px] w-[31px] border border-[#a5a5a5] bg-linear-to-b from-[#f6f6f6] to-[#cfcfcf]"><svg class="h-full w-full"><use href="#bang" /></svg></button>

              <div class="mt-[5px] flex gap-[5px]">
                <button type="button" aria-label="ok" class="h-[17px] w-[31px] border border-[#a5a5a5] bg-linear-to-b from-[#f6f6f6] to-[#cfcfcf]">
                  <svg class="h-full w-full" viewBox="0 0 29 15"><path d="m9 8 3-1 2 2.500L19 1l1.500 1L14.500 13z" fill="#36b336" stroke="#178021" /></svg>
                </button>
                <button type="button" aria-label="help" class="h-[17px] w-[31px] border border-[#a5a5a5] bg-linear-to-b from-[#f6f6f6] to-[#cfcfcf]"><svg class="h-full w-full"><use href="#help" /></svg></button>
              </div>
            </div>
          </form>

          <!-- Tree pane with its scrollbar -->
          <div class="mx-0.5 mb-1 flex flex-1 flex-col justify-end border border-[#b0b0b0] bg-[#f6f6f6]">
            <div class="flex h-[9px] items-center gap-1 bg-[#ececec] px-1">
              <svg class="h-[5px] w-1" viewBox="0 0 4 5"><path d="M4 0v5L0 2.500z" fill="#333" /></svg>
              <div class="flex h-[9px] w-[63px] items-center justify-center gap-px border border-[#a6a6a6] bg-linear-to-b from-[#f8f8f8] to-[#cdcdcd]">
                <i class="h-[3px] w-px bg-[#555]"></i><i class="h-[3px] w-px bg-[#555]"></i><i class="h-[3px] w-px bg-[#555]"></i>
              </div>
              <svg class="ml-auto h-[5px] w-1" viewBox="0 0 4 5"><path d="M0 0v5l4-2.500z" fill="#333" /></svg>
            </div>
          </div>
        </section>

        <!-- Graphics view -->
        <main class="relative min-w-0 flex-1 border-l border-[#777] bg-black">
          <svg class="absolute inset-0 h-full w-full" viewBox="160 73 408 358" preserveAspectRatio="xMidYMid slice" role="img" aria-label="Isometric part model">
            <defs>
              <linearGradient id="wall" gradientUnits="userSpaceOnUse" x1="249" y1="0" x2="460" y2="0">
                <stop offset="0" stop-color="#00a80c" /><stop offset=".1" stop-color="#00c60e" /><stop offset=".4" stop-color="#00be0c" /><stop offset=".62" stop-color="#00a80a" /><stop offset=".72" stop-color="#00830a" /><stop offset=".84" stop-color="#14a52e" /><stop offset=".92" stop-color="#00920a" /><stop offset="1" stop-color="#007a09" />
              </linearGradient>
              <linearGradient id="top" gradientUnits="userSpaceOnUse" x1="300" y1="180" x2="400" y2="295">
                <stop offset="0" stop-color="#00e80c" /><stop offset=".5" stop-color="#00f00b" /><stop offset="1" stop-color="#00e20b" />
              </linearGradient>
              <linearGradient id="bowl" x1="0" y1="0" x2="0" y2="1">
                <stop offset="0" stop-color="#008a0c" /><stop offset=".3" stop-color="#00a40d" /><stop offset=".55" stop-color="#00cc0c" /><stop offset="1" stop-color="#00e20b" />
              </linearGradient>
              <linearGradient id="knob" x1="0" y1="0" x2="1" y2="0">
                <stop offset="0" stop-color="#00cc0c" /><stop offset=".4" stop-color="#00b40c" /><stop offset=".75" stop-color="#00860a" /><stop offset="1" stop-color="#00a00a" />
              </linearGradient>
              <filter id="soft" x="-50%" y="-100%" width="200%" height="300%"><feGaussianBlur stdDeviation="3" /></filter>
              <clipPath id="bowlclip"><ellipse cx="321" cy="211" rx="51" ry="25" /></clipPath>
            </defs>

            <!-- axes -->
            <path d="m160 233 28 16-28 17" fill="none" stroke="#5b4436" />
            <path d="M321 172 494 73M387 364l116 67" stroke="#8a6038" />

            <!-- hidden side of the stock box -->
            <path d="M187 190 321 114l200 116" fill="none" stroke="#b01c1c" />
            <path d="M321 114v58M521 230v58" stroke="#b01c1c" stroke-dasharray="6 2 2 2" />

            <!-- plate -->
            <path d="m188 249 133-77 200 116-133 76z" fill="#00f50c" />

            <!-- boss -->
            <path d="M257 215c-5 12-9 26-8 35 2 14 10 22 24 28l74 30c18 8 30 14 43 19 28 8 62-1 68-17 5-12 0-30-5-48L400 255z" fill="url(#wall)" />
            <path d="M257 217C258 198 285 181 320 181c22 0 38 4 52 14l64 46c13 10 21 20 17 32-5 14-26 23-52 21-18-7-41-23-61-32-17-8-32-12-50-13-18-9-33-19-33-32z" fill="url(#top)" />
            <path d="M290 249c18 1 33 5 50 13 20 9 43 25 61 32" fill="none" stroke="#4bea60" />

            <!-- pocket -->
            <ellipse cx="321" cy="211" rx="51" ry="25" fill="url(#bowl)" />
            <g clip-path="url(#bowlclip)">
              <ellipse cx="322" cy="227" rx="46" ry="18" fill="#00e40c" filter="url(#soft)" />
              <ellipse cx="340" cy="208" rx="14" ry="2" fill="#2be04c" filter="url(#soft)" />
              <ellipse cx="366" cy="207" rx="5" ry="13" fill="#009a0c" filter="url(#soft)" />
              <ellipse cx="274" cy="210" rx="5" ry="13" fill="#009a0c" filter="url(#soft)" />
            </g>
            <path d="M270 213c0-15 23-27 51-27s51 11 51 26c0 6-3 10-7 13M270 213c0 7 4 13 11 17" fill="none" stroke="#37795a" />

            <!-- knob -->
            <ellipse cx="409" cy="264" rx="30" ry="15" fill="#00c20c" filter="url(#soft)" />
            <path d="M432 238c12 8 20 18 21 30-2 14-14 22-36 25 16-9 20-30 15-55z" fill="#00a50a" opacity=".55" />
            <path d="M384 241c-1 8-2 14-4 20 3 10 14 14 28 14s26-5 28-13c-2-7-3-13-4-21z" fill="url(#knob)" />
            <ellipse cx="408" cy="241" rx="24" ry="12" fill="#00cc0c" />
            <ellipse cx="406" cy="239" rx="19" ry="8" fill="#00ea0c" />

            <!-- near side of the stock box -->
            <path d="m187 190 201 116 133-76" fill="none" stroke="#9c3010" />
            <path d="M387.500 306v58" stroke="#a83c10" stroke-dasharray="6 2 2 2" />
            <path d="m188 249 200 116" stroke="#9c7410" />
            <path d="M187.500 73v176" stroke="#b8641c" stroke-width="1.300" />
            <path d="M187.500 249v182" stroke="#7c3a1c" />
            <path d="M186 244v10M183 249h6" stroke="#c84010" />

            <!-- selected contour -->
            <path d="M253 213c-8-7-12-15-12-22 0-26 35-46 81-46 24 0 42 4 58 15l79 62c12 10 12 25 2 35" fill="none" stroke="#c6c69c" />
            <path d="M253 213c10 11 25 18 50 25l57 25c18 8 28 13 53 13 22-1 40-9 48-19" fill="none" stroke="#b9ee10" />
            <path d="m244 172 8 0M248 168v9M245 169l6 6M251 169l-6 6M257 160c-2-6 6-7 6-3s-6 4-4 0M262 154l2 7" fill="none" stroke="#0d6f1f" />
            <path d="M357 190v6M355 194l2 3 2-3" fill="none" stroke="#1a6560" />

            <path d="M213 151h14M220 144v14" stroke="#c9c9c9" />

            <!-- gnomon -->
            <path d="M184 407v-9" stroke="#1818d8" /><path d="m184 407 7-4" stroke="#1b6b2a" /><path d="m184 407 8 4" stroke="#a01818" />
            <g font-size="7"><text x="181" y="397" fill="#1b1be6">Z</text><text x="193" y="403" fill="#238a35">Y</text><text x="194" y="416" fill="#e01818">X</text></g>

            <!-- scale -->
            <path d="M497.500 410v14M553.500 410v14M497 417.500h57" stroke="#a4a46a" />
            <g font-size="8" text-anchor="middle"><text x="524" y="415" fill="#e01818">29.815</text><text x="522" y="425" fill="#ddd">미터계</text></g>
          </svg>

          <p class="absolute top-[22px] left-[15px] flex h-[10px] items-center gap-1 bg-[#fbfbd4] px-0.5"><span>윤곽체인을 선택하시오</span><span>2</span></p>
          <p class="absolute bottom-1 left-0.5 flex gap-1 text-white"><span>그래픽뷰:입체</span><span>WCS:평면</span><span>공구/작업평면:평면</span></p>
          <p class="absolute top-[148px] -right-[13px] z-10 text-[#8b8b8b]">ALZIO.CO.KR</p>
        </main>

        <!-- Quick toolbar -->
        <aside class="w-[18px] shrink-0 border-l border-white bg-[#c4cde6]">
          <div class="flex flex-col border-b border-[#b9bfd0] bg-[#eef0f6] px-0.5 pt-1.5 pb-px" data-column="layers save cubewire pencil palette palette nodes cubetop elbow target"></div>
          <div class="bg-[#eef0f6] pt-1.5 pb-px text-[#8d8d8d]">
            <div class="flex flex-col px-0.5 pb-px" data-column="g-fig g-plus g-lines g-circ g-spl g-sq g-dot g-net g-no"></div>
            <div class="flex flex-col border-t border-[#b5b5b5] px-0.5 py-0.5" data-column="g-copy g-copy"></div>
            <div class="flex flex-col border-t border-[#b5b5b5] px-0.5 py-0.5" data-column="g-fill g-win"></div>
            <div class="flex flex-col border-t border-[#b5b5b5] px-0.5 py-0.5" data-column="g-dim"></div>
          </div>
        </aside>
      </div>

      <!-- Status bar -->
      <footer class="flex h-4 shrink-0 items-center border-t border-[#a8a8a8] bg-[#ededed] pl-[89px]">
        <button type="button" class="h-[13px] w-4 shrink-0 border border-[#c3c3c3] bg-[#f6f6f6]">3D</button>
        <button type="button" class="ml-1 h-[13px] w-[39px] shrink-0 border border-[#c3c3c3] bg-[#f6f6f6]">그래픽뷰</button>
        <button type="button" class="ml-[3px] h-[13px] w-[17px] shrink-0 border border-[#c3c3c3] bg-[#f6f6f6] text-[7px]">평면</button>
        <label for="sz" class="ml-0.5">Z</label>
        <div class="ml-[5px] flex h-[13px] w-[57px] shrink-0 items-center bg-white">
          <div class="flex h-2.5 w-[44px] items-center bg-[#e6f56e]"><input id="sz" value="0.0" class="h-2.5 w-3 bg-[#3f8ae0] text-white outline-none" /></div>
          <svg class="ml-0.5 h-[13px] w-2"><use href="#v" /></svg>
        </div>
        <button type="button" class="ml-[3px] h-[11px] w-[23px] shrink-0 bg-[#ec0c05] text-[#7b0500]">12</button>
        <button type="button" aria-label="colour" class="h-[13px] w-[9px] shrink-0 border border-[#c3c3c3] bg-[#f6f6f6]"><svg class="h-full w-full"><use href="#v" /></svg></button>
        <label for="lv" class="ml-1 w-[17px] shrink-0">레벨</label>
        <div class="relative ml-px h-[13px] min-w-0 flex-1 bg-white">
          <select id="lv" class="h-full w-full appearance-none pl-0.5 outline-none"><option>2</option></select>
          <svg class="pointer-events-none absolute top-0 right-0 h-full w-2"><use href="#v" /></svg>
        </div>
        <button type="button" class="ml-[3px] h-[13px] w-[21px] shrink-0 border border-[#c3c3c3] bg-[#f6f6f6]">속성</button>
        <button type="button" aria-label="point style" class="ml-0.5 flex h-[13px] w-[21px] shrink-0 items-center justify-between bg-white pl-1"><svg class="h-2 w-2" viewBox="0 0 8 8"><path d="M4 1v6M1 5h6M2 7l3-4" stroke="#111" stroke-width="1.300" /></svg><svg class="h-full w-2"><use href="#v" /></svg></button>
        <button type="button" aria-label="line style" class="ml-0.5 flex h-[13px] w-[37px] shrink-0 items-center justify-between bg-white pl-0.5"><span class="h-0.5 w-6 bg-black"></span><svg class="h-full w-2"><use href="#v" /></svg></button>
        <button type="button" aria-label="line width" class="ml-[3px] flex h-[13px] w-[39px] shrink-0 items-center justify-between bg-white pl-0.5"><span class="h-px w-[27px] bg-[#333]"></span><svg class="h-full w-2"><use href="#v" /></svg></button>
        <button type="button" class="ml-[3px] h-[13px] w-[26px] shrink-0 border border-[#c3c3c3] bg-[#f6f6f6]">WCS</button>
        <button type="button" class="ml-1 h-[13px] w-[25px] shrink-0 border border-[#c3c3c3] bg-[#f6f6f6]">그룹</button>
        <button type="button" class="ml-[3px] h-[13px] w-[9px] shrink-0 border border-[#c3c3c3] bg-[#f6f6f6]">!</button>
        <button type="button" class="mr-[11px] ml-[3px] h-[13px] w-[9px] shrink-0 border border-[#c3c3c3] bg-[#f6f6f6]">?</button>
      </footer>
      <div class="h-[3px] shrink-0 bg-[#d0def0]"></div>
    </div>

    <!-- Window edge and the window behind it -->
    <div class="w-1 shrink-0 border-l border-[#a9bbd8] bg-[#d3dff2]"></div>
    <div class="flex w-[11px] shrink-0 flex-col border-l border-[#6e7f9c] bg-[#f5f6f8]">
      <div class="h-10 border-b border-[#999] pt-2.5 text-[#555]">c</div>
      <div class="h-[79px] w-2 border-r border-[#888] bg-[#e9ebf0]"></div>
      <div class="flex w-1.5 flex-col border-r border-[#999]">
        <svg class="h-[97px] w-full" viewBox="0 0 6 97" preserveAspectRatio="none">
          <path d="M0 14h6v82H0z" fill="#dcdcd8" />
          <path d="m0 3 4 5H3v4H0z" fill="#1f5b7c" />
          <path d="M0 17h3v10H0zM0 30l4 2-2 8H0zM0 43h4v10H0z" fill="#f1f1e6" stroke="#555" />
          <path d="M0 56c5 1 5 10 0 11z" fill="#d94c2b" /><path d="M0 62h2v5H0z" fill="#e8b32c" />
          <path d="M0 70h4v11H0z" fill="#d7e8f6" stroke="#346a98" />
          <path d="M0 84h4v6H2l-2 4z" fill="#fff" stroke="#555" />
          <path d="M0 14.500h6M0 28.500h6M0 41.500h6M0 54.500h6M0 68.500h6M0 82.500h6M0 96.500h6" stroke="#a3a3a3" />
        </svg>
      </div>
      <div class="w-[7px] flex-1 border-t border-r border-[#888] bg-linear-to-r from-[#c8cdd8] to-[#f0f2f6]"></div>
      <div class="h-[22px] border-t border-[#999] bg-[#dfe3ec]"></div>
    </div>
  </div>

  <script>
    const icon = (name, cls) => `<svg class="${cls}" aria-hidden="true"><use href="#${name}" /></svg>`;

    // horizontal groups: "v" is a drop-down arrow
    document.querySelectorAll('[data-icons]').forEach((group) => {
      group.innerHTML = group.dataset.icons.split(' ').map((name) => name === 'v'
        ? `<button type="button" aria-label="more" class="flex min-w-0 flex-[2] items-center justify-center">${icon('v', 'h-3 w-2 shrink-0')}</button>`
        : `<button type="button" aria-label="${name}" class="flex min-w-0 flex-[3] items-center justify-center">${icon(name, 'h-3 w-3 shrink-0')}</button>`
      ).join('');
    });

    // vertical groups: a trailing "+" adds a drop-down arrow
    document.querySelectorAll('[data-column]').forEach((group) => {
      group.innerHTML = group.dataset.column.split(' ').map((item) => {
        const name = item.replace('+', '');
        return `<button type="button" aria-label="${name}" class="flex h-[13px] items-center">${icon(name, 'h-3 w-3 shrink-0')}${item.endsWith('+') ? icon('v', 'h-3 w-2 shrink-0') : ''}</button>`;
      }).join('');
    });
  </script>
</body>

</html>
